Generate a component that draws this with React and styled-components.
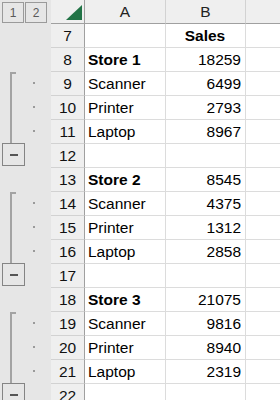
import React from 'react'
import styled, { createGlobalStyle } from 'styled-components'

const GlobalStyle = createGlobalStyle`
  html, body {
    margin: 0;
    padding: 0;
    background: #ffffff;
  }
  body {
    font-family: 'Liberation Sans', Arial, sans-serif;
    overflow: hidden;
  }
`

const rows = [
  { n: 7, a: '', b: 'Sales', head: true },
  { n: 8, a: 'Store 1', b: '18259', bold: true },
  { n: 9, a: 'Scanner', b: '6499' },
  { n: 10, a: 'Printer', b: '2793' },
  { n: 11, a: 'Laptop', b: '8967' },
  { n: 12, a: '', b: '' },
  { n: 13, a: 'Store 2', b: '8545', bold: true },
  { n: 14, a: 'Scanner', b: '4375' },
  { n: 15, a: 'Printer', b: '1312' },
  { n: 16, a: 'Laptop', b: '2858' },
  { n: 17, a: '', b: '' },
  { n: 18, a: 'Store 3', b: '21075', bold: true },
  { n: 19, a: 'Scanner', b: '9816' },
  { n: 20, a: 'Printer', b: '8940' },
  { n: 21, a: 'Laptop', b: '2319' },
  { n: 22, a: '', b: '' },
]

// outline: blank rows before each group, then 3 detail rows + collapse button
const outline = [
  { blank: 2 },
  { group: 3 },
  { blank: 1 },
  { group: 3 },
  { blank: 1 },
  { group: 3 },
]

function App() {
  return (
    <>
      <GlobalStyle />
      <Window>
        <OutlinePanel>
          <LevelBar>
            <LevelButton>1</LevelButton>
            <LevelButton>2</LevelButton>
          </LevelBar>
          {outline.map((o, i) =>
            o.blank ? (
              <Blank key={i} $rows={o.blank} />
            ) : (
              <Group key={i}>
                <BracketCol>
                  <BracketLine />
                  <MinusButton>
                    <MinusBar />
                  </MinusButton>
                </BracketCol>
                <DotCol>
                  {Array.from({ length: o.group }).map((_, j) => (
                    <DotRow key={j}>
                      <Dot />
                    </DotRow>
                  ))}
                </DotCol>
              </Group>
            )
          )}
        </OutlinePanel>

        <Sheet>
          <Corner>
            <svg width="16" height="15" viewBox="0 0 16 15">
              <polygon points="16,0 16,15 0,15" fill="#217346" />
            </svg>
          </Corner>
          <ColHeader>A</ColHeader>
          <ColHeader>B</ColHeader>
          <ColHeader $last />

          {rows.map((r) => (
            <React.Fragment key={r.n}>
              <RowHeader>{r.n}</RowHeader>
              <Cell $bold={r.bold}>{r.a}</Cell>
              <Cell $bold={r.head} $align={r.head ? 'center' : 'right'}>
                {r.b}
              </Cell>
              <Cell $last />
            </React.Fragment>
          ))}
        </Sheet>
      </Window>
    </>
  )
}

const Window = styled.div`
  display: flex;
  width: 280px;
  height: 400px;
  overflow: hidden;
  background: #ffffff;
`

const OutlinePanel = styled.div`
  width: 51px;
  flex-shrink: 0;
  background: #e6e6e6;
  display: flex;
  flex-direction: column;
`

const LevelBar = styled.div`
  height: 24px;
  box-sizing: border-box;
  padding: 2px 0 0 2px;
  display: flex;
  gap: 1px;
`

const LevelButton = styled.div`
  width: 22px;
  height: 21px;
  box-sizing: border-box;
  border: 1px solid #9a9a9a;
  display: flex;
  align-items: center;
  justify-content: center;
  font-size: 12px;
  color: #5a5a5a;
`

const Blank = styled.div`
  height: ${(p) => p.$rows * 24}px;
  flex-shrink: 0;
`

const Group = styled.div`
  height: 96px;
  flex-shrink: 0;
  display: flex;
`

const BracketCol = styled.div`
  width: 25px;
  display: flex;
  flex-direction: column;
  padding-top: 1px;
  padding-bottom: 1px;
  box-sizing: border-box;
`

const BracketLine = styled.div`
  flex: 1;
  margin-left: 10px;
  width: 6px;
  box-sizing: border-box;
  border-left: 2px solid #a3a3a3;
  border-top: 2px solid #a3a3a3;
`

const MinusButton = styled.div`
  margin-left: 2px;
  width: 23px;
  height: 23px;
  box-sizing: border-box;
  border: 1px solid #848484;
  display: flex;
  align-items: center;
  justify-content: center;
`

const MinusBar = styled.div`
  width: 8px;
  height: 2px;
  background: #555555;
`

const DotCol = styled.div`
  display: flex;
  flex-direction: column;
  padding-left: 8px;
`

const DotRow = styled.div`
  height: 24px;
  display: flex;
  align-items: center;
`

const Dot = styled.div`
  width: 2px;
  height: 2px;
  background: #9a9a9a;
`

const Sheet = styled.div`
  flex: 1;
  display: grid;
  grid-template-columns: 34px 81px 80px 1fr;
  grid-auto-rows: 24px;
  align-content: start;
  font-size: 15.5px;
  color: #000000;
`

const Corner = styled.div`
  background: #efefef;
  border-right: 1px solid #a0a0a0;
  border-bottom: 1px solid #a0a0a0;
  display: flex;
  align-items: flex-end;
  justify-content: flex-end;
  padding: 0 2px 3px 0;
`

const ColHeader = styled.div`
  background: #efefef;
  border-right: ${(p) => (p.$last ? 'none' : '1px solid #d2d2d2')};
  border-bottom: 1px solid #a0a0a0;
  display: flex;
  align-items: center;
  justify-content: center;
  color: #222222;
`

const RowHeader = styled.div`
  background: #efefef;
  border-right: 1px solid #a0a0a0;
  border-bottom: 1px solid #d2d2d2;
  text-align: center;
  line-height: 23px;
  color: #111111;
`

const Cell = styled.div`
  border-right: ${(p) => (p.$last ? 'none' : '1px solid #dcdcdc')};
  border-bottom: 1px solid #dcdcdc;
  line-height: 23px;
  padding: 0 4px 0 3px;
  white-space: nowrap;
  overflow: visible;
  font-weight: ${(p) => (p.$bold ? 700 : 400)};
  text-align: ${(p) => p.$align || 'left'};
`

export default App
